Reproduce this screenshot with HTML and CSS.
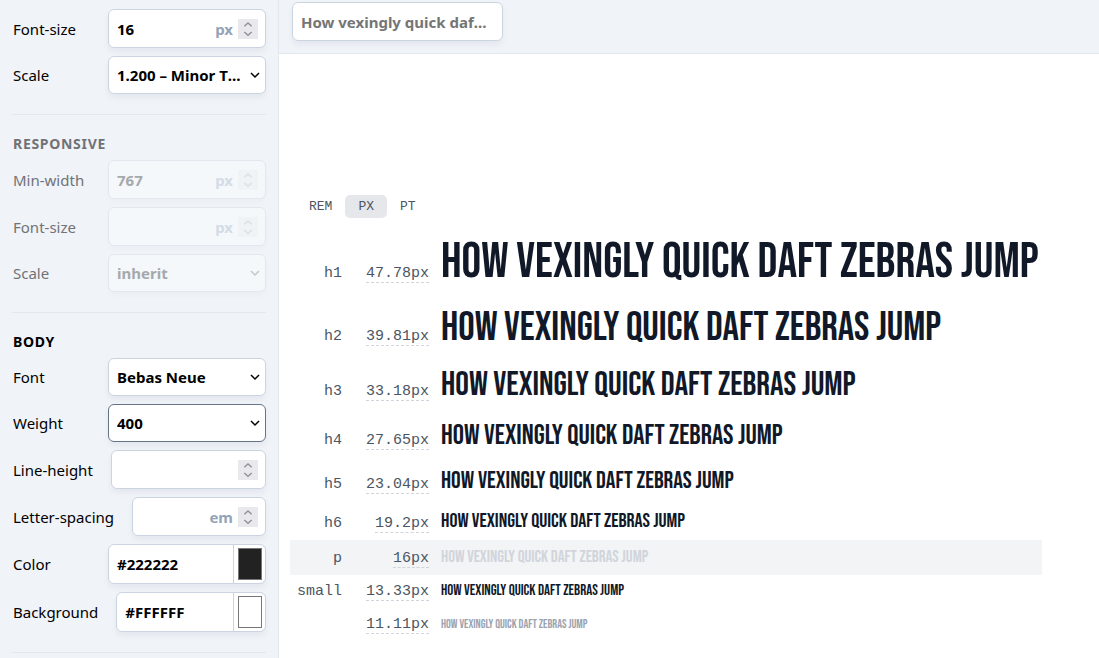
FILE: index.html
```
<!DOCTYPE html>
<html lang="en">
<head>
<meta charset="utf-8">
<meta name="viewport" content="width=device-width, initial-scale=1">
<title>Type Scale</title>
<link rel="stylesheet" href="styles.css">
</head>
<body>
<svg class="symbols" aria-hidden="true">
  <symbol id="chevron" viewBox="0 0 10 10"><path d="M1 3l4 4 4-4" fill="none" stroke="currentColor" stroke-width="1.5"/></symbol>
  <symbol id="spinner" viewBox="0 0 20 20"><rect width="20" height="20" fill="var(--spin-bg)"/><path d="M6.300 7.300L10 4l3.700 3.300M6.300 13L10 16.300l3.700-3.300" fill="none" stroke="currentColor" stroke-width="1.500"/></symbol>
</svg>
<div class="app">
  <aside class="sidebar">
    <section class="group">
      <div class="row"><label for="size">Font-size</label>
        <div class="field"><input id="size" type="number" value="16"><span class="unit">px</span><svg class="spinner"><use href="#spinner"/></svg></div></div>
      <div class="row"><label for="scale">Scale</label>
        <div class="field field-select"><select id="scale"><option>1.200 – Minor Third</option></select><svg class="chevron"><use href="#chevron"/></svg></div></div>
    </section>
    <section class="group muted">
      <h2>Responsive</h2>
      <div class="row"><label for="minw">Min-width</label>
        <div class="field"><input id="minw" type="number" value="767" disabled><span class="unit">px</span><svg class="spinner"><use href="#spinner"/></svg></div></div>
      <div class="row"><label for="rsize">Font-size</label>
        <div class="field"><input id="rsize" type="number" disabled><span class="unit">px</span><svg class="spinner"><use href="#spinner"/></svg></div></div>
      <div class="row"><label for="rscale">Scale</label>
        <div class="field field-select"><select id="rscale" disabled><option>inherit</option></select><svg class="chevron"><use href="#chevron"/></svg></div></div>
    </section>
    <section class="group">
      <h2>Body</h2>
      <div class="row"><label for="font">Font</label>
        <div class="field field-select"><select id="font"><option>Bebas Neue</option></select><svg class="chevron"><use href="#chevron"/></svg></div></div>
      <div class="row"><label for="weight">Weight</label>
        <div class="field field-select active"><select id="weight"><option>400</option></select><svg class="chevron"><use href="#chevron"/></svg></div></div>
      <div class="row"><label for="lh">Line-height</label>
        <div class="field"><input id="lh" type="number"><svg class="spinner"><use href="#spinner"/></svg></div></div>
      <div class="row"><label for="ls">Letter-spacing</label>
        <div class="field"><input id="ls" type="number"><span class="unit">em</span><svg class="spinner"><use href="#spinner"/></svg></div></div>
      <div class="row"><label for="color">Color</label>
        <div class="field field-color"><input id="color" type="text" value="#222222"><input type="color" value="#222222" aria-label="Pick text color"></div></div>
      <div class="row"><label for="bg">Background</label>
        <div class="field field-color"><input id="bg" type="text" value="#FFFFFF"><input type="color" value="#ffffff" aria-label="Pick background color"></div></div>
    </section>
  </aside>
  <main class="main">
    <header class="topbar"><div class="field field-text"><input type="text" aria-label="Preview text" placeholder="How vexingly quick daft zebras jump"></div></header>
    <div class="preview">
      <div class="units"><button type="button">REM</button><button type="button" class="on">PX</button><button type="button">PT</button></div>
      <table class="scale">
        <tr class="s1"><th>h1</th><td class="size"><span>47.78px</span></td><td class="sample">HOW VEXINGLY QUICK DAFT ZEBRAS JUMP</td></tr>
        <tr class="s2"><th>h2</th><td class="size"><span>39.81px</span></td><td class="sample">HOW VEXINGLY QUICK DAFT ZEBRAS JUMP</td></tr>
        <tr class="s3"><th>h3</th><td class="size"><span>33.18px</span></td><td class="sample">HOW VEXINGLY QUICK DAFT ZEBRAS JUMP</td></tr>
        <tr class="s4"><th>h4</th><td class="size"><span>27.65px</span></td><td class="sample">HOW VEXINGLY QUICK DAFT ZEBRAS JUMP</td></tr>
        <tr class="s5"><th>h5</th><td class="size"><span>23.04px</span></td><td class="sample">HOW VEXINGLY QUICK DAFT ZEBRAS JUMP</td></tr>
        <tr class="s6"><th>h6</th><td class="size"><span>19.2px</span></td><td class="sample">HOW VEXINGLY QUICK DAFT ZEBRAS JUMP</td></tr>
        <tr class="s7"><th>p</th><td class="size"><span>16px</span></td><td class="sample">HOW VEXINGLY QUICK DAFT ZEBRAS JUMP</td></tr>
        <tr class="s8"><th>small</th><td class="size"><span>13.33px</span></td><td class="sample">HOW VEXINGLY QUICK DAFT ZEBRAS JUMP</td></tr>
        <tr class="s9"><th></th><td class="size"><span>11.11px</span></td><td class="sample">HOW VEXINGLY QUICK DAFT ZEBRAS JUMP</td></tr>
      </table>
    </div>
  </main>
</div>
</body>
</html>
```
FILE: styles.css
```
* { box-sizing: border-box; }
body { margin: 0; font: 15px/24px "Noto Sans", sans-serif; color: #000; background: #fff; }
.symbols { display: none; }
.app { display: flex; min-height: 100vh; }
.sidebar { flex: 0 0 279px; padding: 9px 12px 0; background: #f0f3f8; border-right: 1px solid #e2e8f0; }
.group { display: flex; flex-direction: column; gap: 8px; padding-bottom: 20px; margin-bottom: 19px; border-bottom: 1px solid #e2e8f0; }
.group:last-child { margin-bottom: 0; }
.group h2 { margin: 0 0 -2px; padding-left: 1px; font-size: 14px; line-height: 20px; letter-spacing: 0.05em; text-transform: uppercase; }
.row { display: flex; align-items: center; justify-content: space-between; gap: 18px; }
.row label { padding-left: 1px; white-space: nowrap; }
.field {
  --spin-bg: #e9e9ed;
  position: relative; display: flex; align-items: center; flex: 0 1 158px; min-width: 0; height: 39px;
  padding-right: 7px; background: #fff; border: 1px solid #cbd5e1; border-radius: 6px;
  box-shadow: 0 4px 6px rgba(15, 23, 42, 0.05);
}
.field input, .field select {
  flex: 1; min-width: 0; width: 100%; height: 100%; margin: 0; padding: 0 0 0 8px; border: 0; outline: 0;
  background: transparent; color: #000; font: 700 15px/24px "Noto Sans", sans-serif;
  appearance: none; text-overflow: ellipsis; opacity: 1;
}
.field input[type="number"] { appearance: textfield; }
.field input::placeholder { color: #757575; opacity: 1; text-overflow: ellipsis; }
.field-select { height: 38px; padding: 0; }
.field-select select { padding-right: 20px; overflow: hidden; white-space: nowrap; }
.chevron { position: absolute; right: 5px; width: 10px; height: 10px; pointer-events: none; }
.unit { color: #94a3b8; font-weight: 700; }
.spinner { flex: none; width: 20px; height: 20px; margin-left: 5px; color: #93939b; }
.active { border-color: #64748b; }
.field-color { height: 40px; padding: 0; }
.field-color input[type="color"] { flex: 0 0 32px; padding: 3px 3px 3px 4px; border-left: 1px solid #cbd5e1; }
.field-color input::-webkit-color-swatch-wrapper { padding: 0; }
.field-color input::-webkit-color-swatch { border: 1px solid #777; border-radius: 0; }
.muted h2, .muted label { color: #707276; }
.muted .field { --spin-bg: #f0f3f6; background: #f4f8fb; border-color: #e2e8f0; box-shadow: 0 4px 6px rgba(15, 23, 42, 0.02); }
.muted input, .muted select { color: #a6a9ab; }
.muted .unit { color: #d3dce6; }
.muted .spinner { color: #dddfe3; }
.muted .chevron { color: #c3c7ca; }
.main { flex: 1; min-width: 0; }
.topbar { padding: 2px 13px 12px; background: #f0f3f8; border-bottom: 1px solid #e2e8f0; }
.field-text { width: 211px; padding-right: 12px; }
.preview { padding: 141px 11px 0; }
.units { display: flex; padding-left: 6px; }
.units button {
  margin: 0; padding: 0 13px; border: 0; border-radius: 5px; background: transparent;
  color: #4b5563; font: 13px/23px "Liberation Mono", monospace;
}
.units .on { background: #e5e7eb; }
.scale { margin-top: 37px; border-collapse: collapse; }
.scale th, .scale td { padding: 7px 0 0; text-align: right; vertical-align: baseline; white-space: nowrap; }
.scale th, .scale .size { color: #4b5563; font: 15px/24px "Liberation Mono", monospace; }
.scale th { padding-left: 7px; }
.scale .size { padding-left: 24px; }
.size span { border-bottom: 1px dashed #d1d5db; }
.scale .sample {
  padding: 0 3px 0 12px; text-align: left; color: #111827;
  font-family: "Bebas Neue", "Liberation Sans Narrow", sans-serif;
  font-weight: 400; line-height: 16px;
}
.s1 { height: 63px; font-size: 49px; }
.s2 { height: 55px; font-size: 41px; }
.s3 { height: 49px; font-size: 34px; }
.s4 { height: 44px; font-size: 28px; }
.s5 { height: 39px; font-size: 24px; }
.s6 { height: 35px; font-size: 20px; }
.s7 { height: 35px; font-size: 17px; background: #f3f4f6; }
.s8 { height: 33px; font-size: 15px; }
.s9 { height: 33px; font-size: 12px; }
.scale .s7 .sample { color: #d1d5db; }
.scale .s9 .sample { color: #9ca3af; }
.scale .s8 th, .scale .s8 .size, .scale .s9 th, .scale .s9 .size { padding-top: 5px; }
```
